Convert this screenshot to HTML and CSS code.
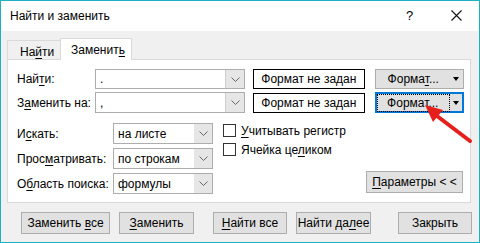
FILE: index.html
```html
<!DOCTYPE html>
<html lang="ru">
<head>
  <meta charset="UTF-8">
  <title>Найти и заменить</title>
  <link rel="stylesheet" href="styles.css">
</head>
<body>
  <div class="window">
    <div class="titlebar">
      <span class="title">Найти и заменить</span>
      <span class="help">?</span>
      <span class="close">
        <svg width="11" height="11" viewBox="0 0 11 11"><path d="M0.5 0.5 L10.5 10.5 M10.5 0.5 L0.5 10.5" stroke="#111" stroke-width="1.1" fill="none"/></svg>
      </span>
    </div>

    <div class="client">
      <div class="tabs">
        <div class="tab"><span>На<u>й</u>ти</span></div>
        <div class="tab active"><span>Заменит<u>ь</u></span></div>
      </div>

      <div class="panel">
        <div class="frow">
          <span class="lbl">Най<u>т</u>и:</span>
          <div class="combo">
            <span class="val">.</span>
            <span class="drop"><svg width="9" height="5" viewBox="0 0 9 5"><path d="M0.5 0.5 L4.5 4.5 L8.5 0.5" stroke="#666" fill="none"/></svg></span>
          </div>
          <div class="fmtbox">Формат не задан</div>
          <div class="fmtbtn">
            <span class="main"><span>Форма<u>т</u>...</span></span>
            <span class="tri"></span>
          </div>
        </div>

        <div class="frow second">
          <span class="lbl">З<u>а</u>менить на:</span>
          <div class="combo">
            <span class="val">,</span>
            <span class="drop"><svg width="9" height="5" viewBox="0 0 9 5"><path d="M0.5 0.5 L4.5 4.5 L8.5 0.5" stroke="#666" fill="none"/></svg></span>
          </div>
          <div class="fmtbox">Формат не задан</div>
          <div class="fmtbtn focused">
            <span class="main"><span class="focusrect">Формат...</span></span>
            <span class="tri"></span>
          </div>
        </div>

        <div class="opts">
          <div class="sels">
            <div class="srow">
              <span class="slbl">И<u>с</u>кать:</span>
              <div class="select">
                <span class="val">на листе</span>
                <span class="drop"><svg width="9" height="5" viewBox="0 0 9 5"><path d="M0.5 0.5 L4.5 4.5 L8.5 0.5" stroke="#666" fill="none"/></svg></span>
              </div>
            </div>
            <div class="srow">
              <span class="slbl">Прос<u>м</u>атривать:</span>
              <div class="select">
                <span class="val">по строкам</span>
                <span class="drop"><svg width="9" height="5" viewBox="0 0 9 5"><path d="M0.5 0.5 L4.5 4.5 L8.5 0.5" stroke="#666" fill="none"/></svg></span>
              </div>
            </div>
            <div class="srow">
              <span class="slbl">О<u>б</u>ласть поиска:</span>
              <div class="select">
                <span class="val">формулы</span>
                <span class="drop"><svg width="9" height="5" viewBox="0 0 9 5"><path d="M0.5 0.5 L4.5 4.5 L8.5 0.5" stroke="#666" fill="none"/></svg></span>
              </div>
            </div>
          </div>

          <div class="checks">
            <div class="crow"><span class="box"></span><span><u>У</u>читывать регистр</span></div>
            <div class="crow"><span class="box"></span><span>Ячейка це<u>л</u>иком</span></div>
          </div>

          <div class="btn params"><span><u>П</u>араметры &lt; &lt;</span></div>
        </div>
      </div>

      <div class="buttons">
        <div class="btn b1"><span>Заменить <u>в</u>се</span></div>
        <div class="btn b2"><span><u>З</u>аменить</span></div>
        <div class="btn b3"><span><u>Н</u>айти все</span></div>
        <div class="btn b4"><span>Найти да<u>л</u>ее</span></div>
        <div class="btn b5"><span>Закрыть</span></div>
      </div>
    </div>

    <svg class="arrow" width="480" height="243" viewBox="0 0 480 243">
      <path d="M470 141 L437 116" stroke="#e5201c" stroke-width="4" stroke-linecap="round" fill="none"/>
      <polygon points="425,105 443,110 433,122" fill="#e5201c"/>
    </svg>
  </div>
</body>
</html>
```

FILE: styles.css
```css
html, body {
  margin: 0;
  padding: 0;
  background: #fff;
}

body {
  font-family: 'Liberation Sans', Arial, sans-serif;
  font-size: 12px;
  color: #000;
  white-space: nowrap;
}

u {
  text-decoration: underline;
  text-underline-offset: 2px;
}

.window {
  position: relative;
  width: 480px;
  height: 243px;
  box-sizing: border-box;
  border: 1px solid #1cb0c2;
  background: #f0f0f0;
  overflow: hidden;
}

.titlebar {
  display: flex;
  align-items: center;
  height: 30px;
  background: #fff;
  padding-left: 9px;
}

.title {
  flex: 1;
  font-size: 12px;
  margin-top: -1px;
}

.help {
  width: 12px;
  font-size: 13px;
  margin-right: 33px;
  margin-top: -2px;
}

.close {
  display: flex;
  margin-right: 17px;
  margin-top: -2px;
}

.client {
  height: 211px;
  padding-top: 7px;
  box-sizing: border-box;
}

.tabs {
  display: flex;
  align-items: flex-end;
  margin-left: 6px;
  margin-bottom: -1px;
  position: relative;
  z-index: 1;
}

.tab {
  box-sizing: border-box;
  width: 53px;
  height: 19px;
  margin-bottom: 1px;
  border: 1px solid #d9d9d9;
  border-bottom: none;
  border-right: none;
  background: #f0f0f0;
  display: flex;
  align-items: center;
  padding-left: 12px;
  padding-top: 3px;
}

.tab.active {
  width: 72px;
  height: 22px;
  margin-bottom: 0;
  border-right: 1px solid #d9d9d9;
  background: #fff;
  padding-left: 10px;
  padding-top: 0;
}

.panel {
  box-sizing: border-box;
  width: 464px;
  height: 144px;
  margin-left: 6px;
  background: #fff;
  border: 1px solid #d9d9d9;
  padding: 9px 6px 0 9px;
}

.frow {
  display: flex;
  align-items: center;
  height: 20px;
}

.frow.second {
  margin-top: 3px;
  height: 21px;
}

.lbl {
  width: 78px;
  flex-shrink: 0;
}

.combo, .select {
  box-sizing: border-box;
  height: 100%;
  border: 1px solid #adadad;
  display: flex;
  align-items: stretch;
  background: #fff;
}

.combo {
  width: 151px;
}

.val {
  flex: 1;
  display: flex;
  align-items: center;
  padding-left: 4px;
}

.drop {
  width: 18px;
  background: #e6e6e6;
  border-left: 1px solid #cfcfcf;
  display: flex;
  align-items: center;
  justify-content: center;
}

.fmtbox {
  box-sizing: border-box;
  width: 112px;
  height: 20px;
  margin-left: 8px;
  border: 1px solid #000;
  display: flex;
  align-items: center;
  justify-content: center;
}

.fmtbtn {
  box-sizing: border-box;
  width: 90px;
  height: 20px;
  margin-left: 10px;
  background: #e1e1e1;
  border: 1px solid #adadad;
  display: flex;
  align-items: center;
}

.fmtbtn .main {
  flex: 1;
  display: flex;
  justify-content: center;
  padding-left: 4px;
}

.fmtbtn .tri {
  width: 0;
  height: 0;
  border-left: 3px solid transparent;
  border-right: 3px solid transparent;
  border-top: 4px solid #000;
  margin: 0 4px 0 6px;
}

.fmtbtn.focused {
  height: 21px;
  border: 2px solid #0078d7;
}

.fmtbtn.focused .main {
  padding-left: 1px;
}

.focusrect {
  outline: 1px dotted #000;
  outline-offset: 0;
  padding: 1px 11px 1px 9px;
  line-height: 14px;
}

.fmtbtn.focused .tri {
  margin-right: 3px;
  margin-left: 3px;
}

.opts {
  display: flex;
  margin-top: 10px;
}

.sels {
  display: flex;
  flex-direction: column;
  gap: 4px;
}

.srow {
  display: flex;
  align-items: center;
  height: 21px;
}

.slbl {
  width: 96px;
  flex-shrink: 0;
}

.select {
  width: 100px;
}

.select .drop {
  border-left: none;
}

.checks {
  display: flex;
  flex-direction: column;
  gap: 6px;
  margin-left: 10px;
  padding-top: 1px;
}

.crow {
  display: flex;
  align-items: center;
  height: 13px;
  gap: 5px;
}

.box {
  box-sizing: border-box;
  width: 13px;
  height: 13px;
  border: 1px solid #333;
  background: #fff;
}

.btn {
  box-sizing: border-box;
  height: 22px;
  background: #e1e1e1;
  border: 1px solid #adadad;
  display: flex;
  align-items: center;
  justify-content: center;
}

.params {
  width: 97px;
  margin-left: auto;
  margin-right: 1px;
  align-self: flex-end;
  margin-bottom: 1px;
}

.buttons {
  display: flex;
  margin-top: 9px;
  padding-left: 20px;
}

.b1 { width: 89px; }
.b2 { width: 75px; margin-left: 9px; }
.b3 { width: 74px; margin-left: 19px; }
.b4 { width: 75px; margin-left: 9px; }
.b5 { width: 74px; margin-left: 27px; }

.arrow {
  position: absolute;
  left: -1px;
  top: -1px;
  z-index: 5;
  pointer-events: none;
}
```
